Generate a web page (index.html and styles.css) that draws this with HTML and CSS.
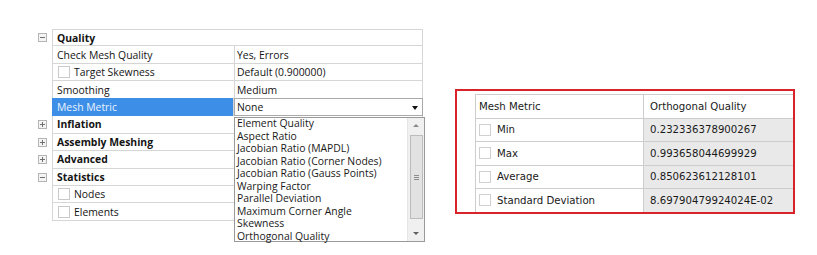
FILE: index.html
```html
<!DOCTYPE html>
<html lang="en">
<head>
  <meta charset="UTF-8">
  <title>Mesh Metric</title>
  <link rel="stylesheet" href="styles.css">
</head>
<body>
  <div class="page">
    <!-- painel de detalhes -->
    <div class="details">
      <div class="row group">
        <span class="exp"><svg width="9" height="9" viewBox="0 0 9 9"><rect x="0.5" y="0.5" width="8" height="8" fill="#f4f4f4" stroke="#b4b4b4"/><path d="M2 4.5h5" stroke="#707070"/></svg></span>
        <div class="cells"><div class="name full">Quality</div></div>
      </div>
      <div class="row">
        <span class="exp"></span>
        <div class="cells"><div class="name">Check Mesh Quality</div><div class="val">Yes, Errors</div></div>
      </div>
      <div class="row">
        <span class="exp"></span>
        <div class="cells"><div class="name"><span class="check"></span>Target Skewness</div><div class="val">Default (0.900000)</div></div>
      </div>
      <div class="row">
        <span class="exp"></span>
        <div class="cells"><div class="name">Smoothing</div><div class="val">Medium</div></div>
      </div>
      <div class="row">
        <span class="exp"></span>
        <div class="cells"><div class="name selected">Mesh Metric</div><div class="val combo">None<span class="arrow"></span></div></div>
      </div>
      <div class="row group">
        <span class="exp"><svg width="9" height="9" viewBox="0 0 9 9"><rect x="0.5" y="0.5" width="8" height="8" fill="#f4f4f4" stroke="#b4b4b4"/><path d="M2 4.5h5M4.5 2v5" stroke="#707070"/></svg></span>
        <div class="cells"><div class="name full">Inflation</div></div>
      </div>
      <div class="row group">
        <span class="exp"><svg width="9" height="9" viewBox="0 0 9 9"><rect x="0.5" y="0.5" width="8" height="8" fill="#f4f4f4" stroke="#b4b4b4"/><path d="M2 4.5h5M4.5 2v5" stroke="#707070"/></svg></span>
        <div class="cells"><div class="name full">Assembly Meshing</div></div>
      </div>
      <div class="row group">
        <span class="exp"><svg width="9" height="9" viewBox="0 0 9 9"><rect x="0.5" y="0.5" width="8" height="8" fill="#f4f4f4" stroke="#b4b4b4"/><path d="M2 4.5h5M4.5 2v5" stroke="#707070"/></svg></span>
        <div class="cells"><div class="name full">Advanced</div></div>
      </div>
      <div class="row group">
        <span class="exp"><svg width="9" height="9" viewBox="0 0 9 9"><rect x="0.5" y="0.5" width="8" height="8" fill="#f4f4f4" stroke="#b4b4b4"/><path d="M2 4.5h5" stroke="#707070"/></svg></span>
        <div class="cells"><div class="name full">Statistics</div></div>
      </div>
      <div class="row">
        <span class="exp"></span>
        <div class="cells"><div class="name"><span class="check"></span>Nodes</div><div class="val"></div></div>
      </div>
      <div class="row">
        <span class="exp"></span>
        <div class="cells"><div class="name"><span class="check"></span>Elements</div><div class="val"></div></div>
      </div>

      <!-- lista aberta do combo -->
      <div class="dropdown">
        <ul class="options">
          <li>Element Quality</li>
          <li>Aspect Ratio</li>
          <li>Jacobian Ratio (MAPDL)</li>
          <li>Jacobian Ratio (Corner Nodes)</li>
          <li>Jacobian Ratio (Gauss Points)</li>
          <li>Warping Factor</li>
          <li>Parallel Deviation</li>
          <li>Maximum Corner Angle</li>
          <li>Skewness</li>
          <li>Orthogonal Quality</li>
        </ul>
        <div class="scrollbar">
          <span class="sb-up"></span>
          <span class="thumb"><span class="grip"></span></span>
          <span class="sb-down"></span>
        </div>
      </div>
    </div>

    <!-- tabela de resultados -->
    <div class="result">
      <div class="rrow">
        <div class="c0"></div>
        <div class="c1">Mesh Metric</div>
        <div class="c2 head">Orthogonal Quality</div>
      </div>
      <div class="rrow">
        <div class="c0"></div>
        <div class="c1"><span class="rcheck"></span>Min</div>
        <div class="c2">0.232336378900267</div>
      </div>
      <div class="rrow">
        <div class="c0"></div>
        <div class="c1"><span class="rcheck"></span>Max</div>
        <div class="c2">0.993658044699929</div>
      </div>
      <div class="rrow">
        <div class="c0"></div>
        <div class="c1"><span class="rcheck"></span>Average</div>
        <div class="c2">0.850623612128101</div>
      </div>
      <div class="rrow">
        <div class="c0"></div>
        <div class="c1"><span class="rcheck"></span>Standard Deviation</div>
        <div class="c2">8.69790479924024E-02</div>
      </div>
    </div>
  </div>
</body>
</html>
```

FILE: styles.css
```css
body {
  margin: 0;
  background-color: white;
}
.page {
  display: flex;
  align-items: flex-start;
  width: 817px;
  height: 255px;
}
.details {
  position: relative;
  margin: 29px 0 0 35px;
  font-family: "Open Sans", "Liberation Sans", sans-serif;
  font-size: 10.4px;
  color: #141414;
}
.row {
  display: flex;
  height: 17.45px;
}
.row:first-child .cells {
  border-top: 1px solid #d6d6d6;
}
.exp {
  width: 17px;
  display: flex;
  align-items: center;
  padding-left: 3px;
  box-sizing: border-box;
}
.exp svg {
  display: block;
}
.cells {
  display: flex;
  border-left: 1px solid #d6d6d6;
  border-right: 1px solid #d6d6d6;
  border-bottom: 1px solid #d6d6d6;
  width: 371px;
  box-sizing: border-box;
}
.name,
.val {
  display: flex;
  align-items: center;
  padding-left: 4px;
  box-sizing: border-box;
}
.name {
  width: 182px;
  border-right: 1px solid #d6d6d6;
}
.name.full {
  width: 100%;
  border-right: none;
  font-weight: bold;
}
.val {
  flex: 1;
  padding-left: 2px;
}
.selected {
  background-color: #3d8ee6;
  color: #eaf3ff;
  margin-top: -1px;
  margin-bottom: -1px;
  margin-left: -1px;
  padding-left: 5px;
}
.combo {
  position: relative;
  border: 1px solid #a9a9a9;
  margin: -1px -1px -1px 0;
}
.arrow {
  position: absolute;
  right: 4px;
  top: 7px;
  width: 0;
  height: 0;
  border-left: 3.5px solid transparent;
  border-right: 3.5px solid transparent;
  border-top: 4px solid #111;
}
.check {
  width: 10px;
  height: 10px;
  border: 1px solid #c9c9c9;
  background-color: #fff;
  margin: 0 4px 0 1px;
}
.dropdown {
  position: absolute;
  left: 199px;
  top: 88px;
  width: 191px;
  height: 125px;
  box-sizing: border-box;
  border: 1px solid #9a9a9a;
  background-color: white;
  display: flex;
}
.options {
  list-style: none;
  margin: -1px 0 0 0;
  padding: 0 0 0 2px;
  flex: 1;
  font-size: 10.4px;
  line-height: 12.5px;
  color: #1a1a1a;
}
.scrollbar {
  width: 16px;
  background-color: #f0f0f0;
  border-left: 1px solid #e6e6e6;
  display: flex;
  flex-direction: column;
  align-items: center;
}
.sb-up,
.sb-down {
  height: 17px;
  width: 16px;
  position: relative;
}
.sb-up::after,
.sb-down::after {
  content: "";
  position: absolute;
  left: 5px;
  width: 0;
  height: 0;
  border-left: 3px solid transparent;
  border-right: 3px solid transparent;
}
.sb-up::after {
  top: 6px;
  border-bottom: 3px solid #8a8a8a;
}
.sb-down::after {
  top: 8px;
  border-top: 3px solid #606060;
}
.thumb {
  flex: 1;
  width: 13px;
  margin: 0 0 5px 0;
  background-color: #e2e2e2;
  border: 1px solid #bcbcbc;
  box-sizing: border-box;
  display: flex;
  align-items: center;
  justify-content: center;
}
.grip {
  width: 5px;
  height: 5px;
  border-top: 1px solid #8c8c8c;
  border-bottom: 1px solid #8c8c8c;
  box-sizing: border-box;
  background: linear-gradient(#8c8c8c, #8c8c8c) center / 5px 1px no-repeat;
}
.result {
  margin: 89px 0 0 32px;
  width: 340px;
  border: 2px solid #d9232b;
  padding-top: 3px;
  box-sizing: border-box;
  font-family: "DejaVu Sans", sans-serif;
  font-stretch: condensed;
  font-size: 11.3px;
  color: #1a1a1a;
}
.rrow {
  display: grid;
  grid-template-columns: 18px 168px 150px;
  height: 23.5px;
}
.rrow > div {
  display: flex;
  align-items: center;
}
.c1,
.c2 {
  border-top: 1px solid #cdcdcd;
  border-left: 1px solid #cdcdcd;
}
.c1 {
  padding-left: 3px;
}
.c2 {
  padding-left: 6px;
  background-color: #e9e9e9;
}
.c2.head {
  background-color: white;
}
.rcheck {
  width: 12px;
  height: 12px;
  border: 1px solid #d0d0d0;
  box-sizing: border-box;
  margin-right: 6px;
}
```
